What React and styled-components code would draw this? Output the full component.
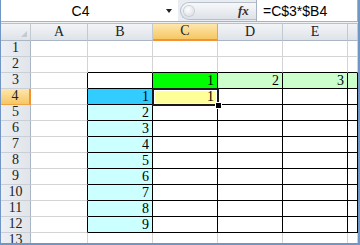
import React from "react";
import styled, { createGlobalStyle, css } from "styled-components";

const GlobalStyle = createGlobalStyle`
  html, body { margin: 0; padding: 0; background: #fff; }
  body { width: 360px; height: 245px; overflow: hidden; }
`;

const Frame = styled.div`
  width: 360px;
  height: 245px;
  box-sizing: border-box;
  border-left: 1px solid #7196c6;
  border-right: 2px solid #7196c6;
  border-bottom: 2px solid #7196c6;
  display: flex;
  flex-direction: column;
  overflow: hidden;
  background: #fff;
`;

const FormulaBar = styled.div`
  display: flex;
  height: 21px;
  flex-shrink: 0;
  background: #e9edf2;
`;

const NameBox = styled.div`
  width: 177px;
  display: flex;
  align-items: center;
  background: #fff;
`;

const NameField = styled.div`
  flex: 1;
  text-align: center;
  font-family: "Liberation Sans", Arial, sans-serif;
  font-size: 14px;
  color: #000;
`;

const DropArrow = styled.div`
  width: 18px;
  display: flex;
  justify-content: center;
  &::after {
    content: "";
    width: 0;
    height: 0;
    border-left: 3px solid transparent;
    border-right: 3px solid transparent;
    border-top: 4px solid #222;
  }
`;

const Grip = styled.div`
  width: 76px;
  margin: 2px 0 0 2px;
  height: 18px;
  box-sizing: border-box;
  border: 1px solid #b8c0ca;
  border-right: none;
  border-radius: 9px 0 0 9px;
  background: linear-gradient(#f7f8fa, #dde2e8);
  display: flex;
  align-items: center;
  padding-left: 3px;
  gap: 44px;
`;

const Knob = styled.div`
  width: 10px;
  height: 10px;
  border-radius: 50%;
  background: radial-gradient(circle at 40% 35%, #ffffff, #d3d8de);
  box-shadow: 0 0 0 1px #c7cdd4;
`;

const FxLabel = styled.span`
  font-family: "Liberation Serif", "Times New Roman", serif;
  font-style: italic;
  font-weight: bold;
  font-size: 13px;
  color: #333;
`;

const FormulaInput = styled.div`
  flex: 1;
  background: #fff;
  border-left: 1px solid #a7b3c2;
  border-right: 1px solid #a7b3c2;
  display: flex;
  align-items: center;
  padding-left: 6px;
  font-family: "Liberation Sans", Arial, sans-serif;
  font-size: 14px;
  color: #000;
`;

const Band = styled.div`
  height: 3px;
  flex-shrink: 0;
  box-sizing: border-box;
  border-top: 1px solid #aab2bd;
  border-bottom: 1px solid #b9c1cb;
  background: #eef0f3;
`;

const Grid = styled.div`
  display: grid;
  grid-template-columns: 30px 57px 65px 65px 65px 65px 1fr;
  grid-template-rows: 17px;
  grid-auto-rows: 16px;
`;

const HeadBase = css`
  box-sizing: border-box;
  display: flex;
  align-items: flex-end;
  justify-content: center;
  font-family: "Liberation Serif", "Times New Roman", serif;
  font-size: 14px;
  line-height: 14px;
  color: #222;
  overflow: hidden;
`;

const Corner = styled.div`
  ${HeadBase}
  position: relative;
  background: linear-gradient(#f2f4f7, #dfe3e8);
  border-right: 1px solid #c3c9d1;
  border-bottom: 1px solid #a9b6c6;
  &::after {
    content: "";
    position: absolute;
    right: 3px;
    bottom: 3px;
    width: 0;
    height: 0;
    border-left: 6px solid transparent;
    border-bottom: 6px solid #c5cad1;
  }
`;

const ColHead = styled.div`
  ${HeadBase}
  padding-bottom: 1px;
  background: ${(p) =>
    p.$on
      ? "linear-gradient(#fde7ad, #f6c763)"
      : "linear-gradient(#f2f4f7, #dfe3e8)"};
  border-right: 1px solid ${(p) => (p.$on ? "#f0a443" : "#c3c9d1")};
  border-bottom: ${(p) => (p.$on ? "2px solid #f29436" : "1px solid #a9b6c6")};
`;

const RowHead = styled.div`
  ${HeadBase}
  padding-bottom: 1px;
  background: ${(p) =>
    p.$on
      ? "linear-gradient(#fde7ad, #f6c763)"
      : "linear-gradient(90deg, #eceff3, #e1e5ea)"};
  border-right: ${(p) => (p.$on ? "2px solid #f29436" : "1px solid #a9b6c6")};
  border-bottom: 1px solid ${(p) => (p.$on ? "#f0a443" : "#c9cfd7")};
`;

const Cell = styled.div`
  position: relative;
  z-index: ${(p) => (p.$active ? 2 : "auto")};
  box-sizing: border-box;
  display: flex;
  align-items: flex-end;
  justify-content: flex-end;
  padding: 0 3px 0 0;
  font-family: "Liberation Serif", "Times New Roman", serif;
  font-size: 14px;
  line-height: 14px;
  color: #000;
  background: ${(p) => p.$bg || "#fff"};
  border-right: 1px solid ${(p) => (p.$br ? "#000" : "#d4d4d4")};
  border-bottom: 1px solid ${(p) => (p.$bb ? "#000" : "#d4d4d4")};
`;

const Cursor = styled.div`
  position: absolute;
  left: -1px;
  top: -1px;
  right: -2px;
  bottom: -2px;
  border: 2px solid #1a1a1a;
  box-shadow: inset 0 0 0 1px #fff;
  pointer-events: none;
  &::after {
    content: "";
    position: absolute;
    right: -4px;
    bottom: -4px;
    width: 5px;
    height: 5px;
    background: #000;
    box-shadow: 0 0 0 1px #fff;
  }
`;

const cols = ["A", "B", "C", "D", "E", ""];

const fills = {
  "3-2": "#00ff00",
  "3-3": "#ccffcc",
  "3-4": "#ccffcc",
  "3-5": "#ccffcc",
  "4-1": "#33ccff",
  "4-2": "#ffff99",
};

const values = {
  "3-2": 1,
  "3-3": 2,
  "3-4": 3,
  "4-2": 1,
};

const cellInfo = (r, c) => {
  const key = `${r}-${c}`;
  let bg = fills[key];
  if (!bg && c === 1 && r >= 5 && r <= 12) bg = "#ccffff";
  let val = values[key];
  if (val === undefined && c === 1 && r >= 4 && r <= 12) val = r - 3;
  // black borders round the B3:F12 block
  const br = r >= 3 && r <= 12;
  const bb = r >= 2 && r <= 12 && c >= 1;
  return { bg, val, br, bb };
};

const App = () => {
  const rows = Array.from({ length: 13 }, (_, i) => i + 1);
  return (
    <>
      <GlobalStyle />
      <Frame>
        <FormulaBar>
          <NameBox>
            <NameField>C4</NameField>
            <DropArrow />
          </NameBox>
          <Grip>
            <Knob />
            <FxLabel>fx</FxLabel>
          </Grip>
          <FormulaInput>=C$3*$B4</FormulaInput>
        </FormulaBar>
        <Band />
        <Grid>
          <Corner />
          {cols.map((h, i) => (
            <ColHead key={i} $on={h === "C"}>
              {h}
            </ColHead>
          ))}
          {rows.map((r) => (
            <React.Fragment key={r}>
              <RowHead $on={r === 4}>{r}</RowHead>
              {cols.map((_, c) => {
                const { bg, val, br, bb } = cellInfo(r, c);
                const active = r === 4 && c === 2;
                return (
                  <Cell key={c} $bg={bg} $br={br} $bb={bb} $active={active}>
                    {val}
                    {active && <Cursor />}
                  </Cell>
                );
              })}
            </React.Fragment>
          ))}
        </Grid>
      </Frame>
    </>
  );
};

export default App;
